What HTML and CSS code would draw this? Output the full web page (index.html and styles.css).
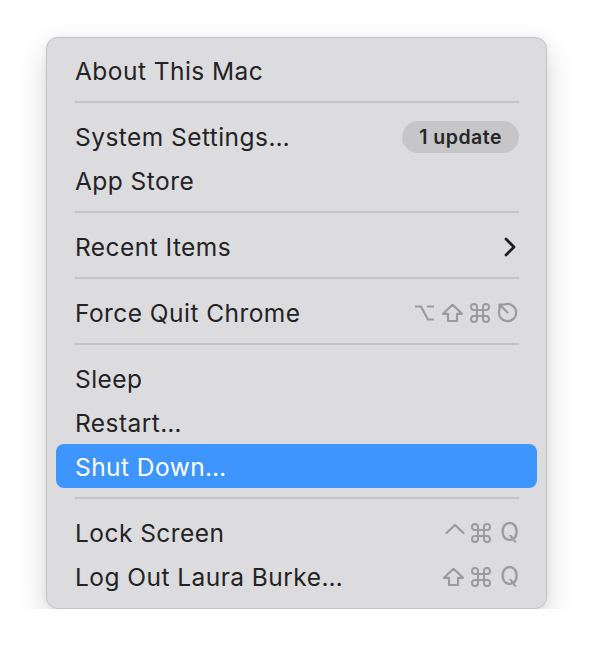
FILE: index.html
```html
<!DOCTYPE html>
<html>
<head>
<meta charset="utf-8">
<link rel="stylesheet" href="styles.css">
</head>
<body>
<div class="menu">
  <div class="item"><span class="label">About This Mac</span></div>
  <div class="sep"></div>
  <div class="item"><span class="label">System Settings…</span><span class="badge">1 update</span></div>
  <div class="item"><span class="label">App Store</span></div>
  <div class="sep"></div>
  <div class="item"><span class="label">Recent Items</span>
    <svg class="chev" width="14" height="22" viewBox="0 0 14 22"><polyline points="3,3 11,11 3,19" fill="none" stroke="#1f1f1f" stroke-width="2.8" stroke-linecap="round" stroke-linejoin="round"/></svg>
  </div>
  <div class="sep"></div>
  <div class="item"><span class="label">Force Quit Chrome</span>
    <span class="keys">
      <svg class="k" width="21" height="20" viewBox="0 0 21 20"><path d="M1 3.5H7L14 16.5H20M13 3.5H20" fill="none" stroke="currentColor" stroke-width="2.2" stroke-linejoin="round"/></svg>
      <svg class="k" width="23" height="20" viewBox="0 0 23 20"><path d="M11.5 1.8L2 10.8H7V18H16V10.8H21Z" fill="none" stroke="currentColor" stroke-width="2.2" stroke-linejoin="round"/></svg>
      <svg class="k" width="20" height="20" viewBox="2 2 20 20"><path d="M9 6a3 3 0 1 0-3 3h12a3 3 0 1 0-3-3v12a3 3 0 1 0 3-3H6a3 3 0 1 0 3 3V6z" fill="none" stroke="currentColor" stroke-width="2" stroke-linejoin="round"/></svg>
      <svg class="k" width="23" height="23" viewBox="0 0 23 23"><path d="M9.5 3.2A8.6 8.6 0 1 1 3.2 9.5" fill="none" stroke="currentColor" stroke-width="2.2" stroke-linecap="round"/><path d="M11.5 11.5L3.8 3.8M3.5 9V3.5H9" fill="none" stroke="currentColor" stroke-width="2.2" stroke-linecap="round" stroke-linejoin="round"/></svg>
    </span>
  </div>
  <div class="sep"></div>
  <div class="item"><span class="label">Sleep</span></div>
  <div class="item"><span class="label">Restart…</span></div>
  <div class="item active"><span class="label">Shut Down…</span></div>
  <div class="sep"></div>
  <div class="item"><span class="label">Lock Screen</span>
    <span class="keys">
      <svg class="k" width="20" height="20" viewBox="0 0 20 20"><polyline points="1.5,10 10,2 18.5,10" fill="none" stroke="currentColor" stroke-width="2.3" stroke-linecap="round" stroke-linejoin="round"/></svg>
      <svg class="k" width="20" height="20" viewBox="2 2 20 20"><path d="M9 6a3 3 0 1 0-3 3h12a3 3 0 1 0-3-3v12a3 3 0 1 0 3-3H6a3 3 0 1 0 3 3V6z" fill="none" stroke="currentColor" stroke-width="2" stroke-linejoin="round"/></svg>
      <span class="q">Q</span>
    </span>
  </div>
  <div class="item"><span class="label">Log Out Laura Burke…</span>
    <span class="keys">
      <svg class="k" width="23" height="20" viewBox="0 0 23 20"><path d="M11.5 1.8L2 10.8H7V18H16V10.8H21Z" fill="none" stroke="currentColor" stroke-width="2.2" stroke-linejoin="round"/></svg>
      <svg class="k" width="20" height="20" viewBox="2 2 20 20"><path d="M9 6a3 3 0 1 0-3 3h12a3 3 0 1 0-3-3v12a3 3 0 1 0 3-3H6a3 3 0 1 0 3 3V6z" fill="none" stroke="currentColor" stroke-width="2" stroke-linejoin="round"/></svg>
      <span class="q">Q</span>
    </span>
  </div>
</div>
</body>
</html>
```

FILE: styles.css
```css
html, body {
  margin: 0;
  padding: 0;
  background: #ffffff;
}
body {
  padding: 37px 0 0 46px;
  font-family: Inter, "Noto Sans", "Liberation Sans", sans-serif;
}
.menu {
  box-sizing: border-box;
  width: 501px;
  padding: 10px 9px 10px 9px;
  background: #dcdcde;
  border: 1px solid #c3c3c5;
  border-radius: 12px;
  box-shadow: 0 12px 30px rgba(0, 0, 0, 0.16), 0 0 6px rgba(0, 0, 0, 0.06);
}
.item {
  height: 44px;
  display: flex;
  align-items: center;
  justify-content: space-between;
  padding: 1px 18px 0 19px;
  box-sizing: border-box;
  border-radius: 8px;
  color: #232325;
  font-size: 24.5px;
  letter-spacing: 0.45px;
}
.item.active {
  background: #3e95fe;
  color: #ffffff;
}
.sep {
  height: 2px;
  margin: 9px 18px 11px 19px;
  background: #c4c4c6;
}
.badge {
  height: 32px;
  line-height: 32px;
  padding: 0 17px;
  border-radius: 16px;
  background: #c6c6c8;
  color: #262628;
  font-size: 19.5px;
  font-weight: 600;
  letter-spacing: 0.5px;
}
.chev {
  margin-right: 2px;
}
.keys {
  display: flex;
  align-items: center;
  gap: 6px;
  color: #9b9b9d;
}
.q {
  margin-left: 3px;
  font-size: 25px;
  letter-spacing: 0;
  color: #9b9b9d;
  line-height: 1;
}
```
